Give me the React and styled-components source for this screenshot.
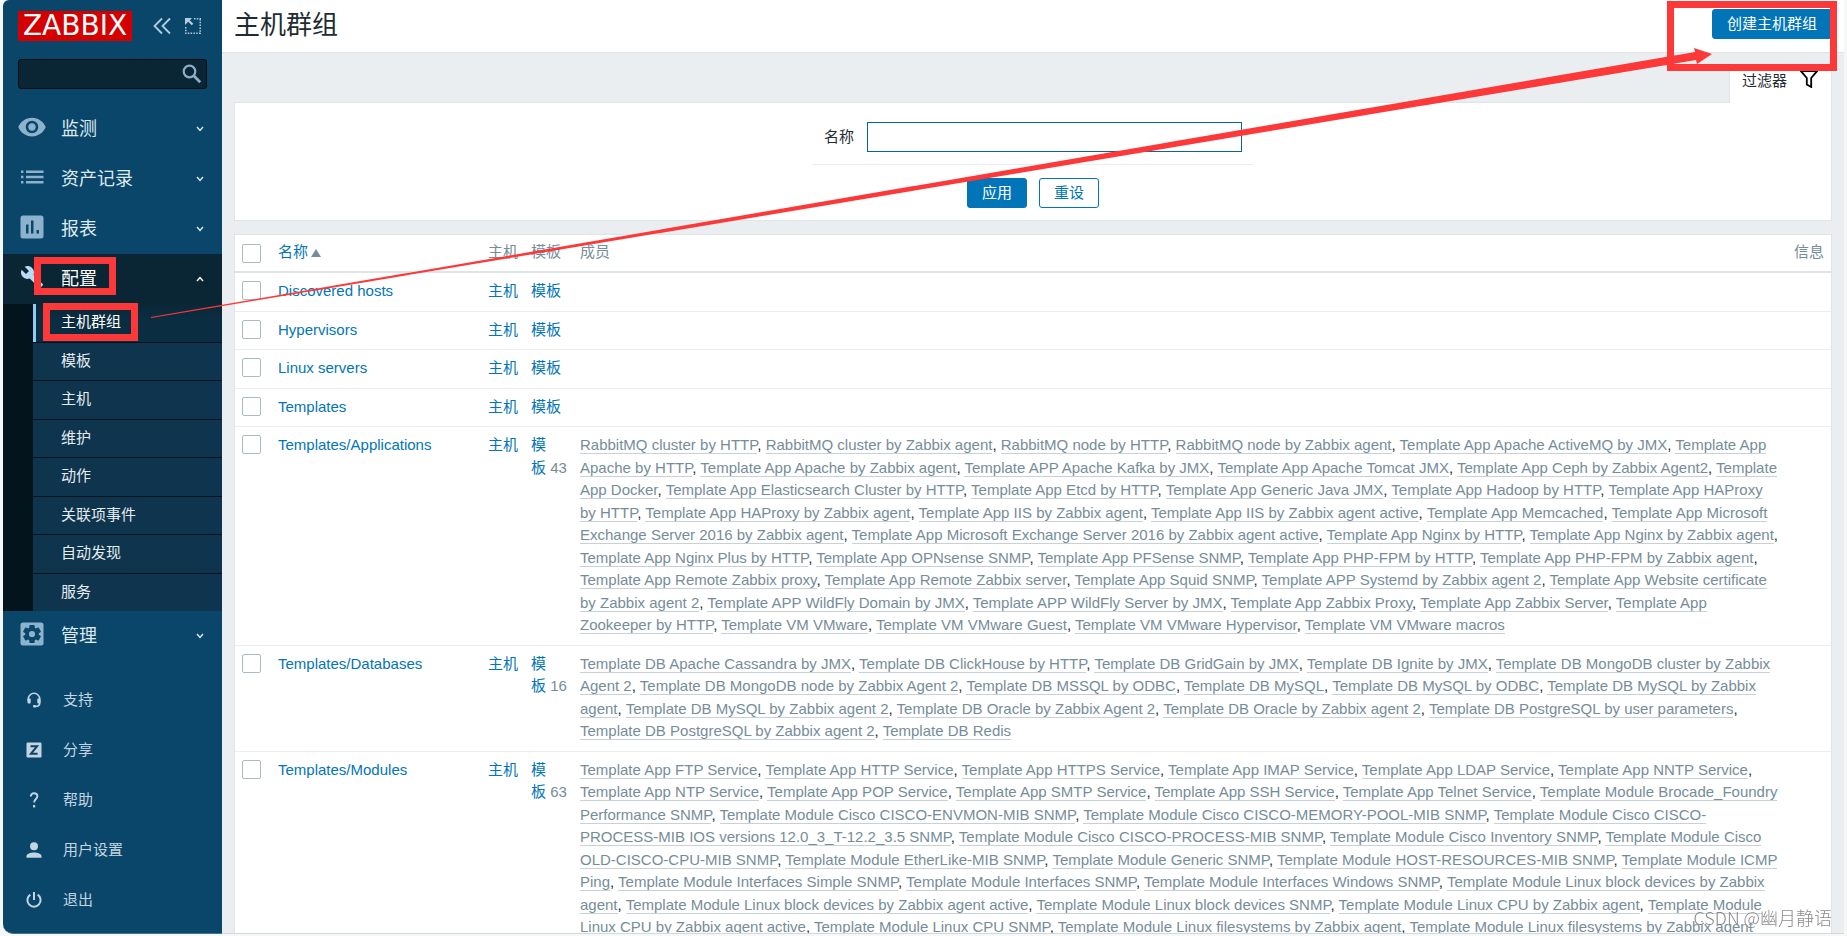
import React from "react";
import styled, { createGlobalStyle, css } from "styled-components";

const GlobalStyle = createGlobalStyle`
  *, *::before, *::after { box-sizing: border-box; }
  body {
    margin: 0;
    background: #f6f7f7;
    color: #1f2c33;
    font-family: "Liberation Sans", "Noto Sans CJK SC", sans-serif;
    font-size: 15px;
    line-height: 1.5;
  }
  button, input { font: inherit; }
  a { text-decoration: none; }
`;

const colors = {
  link: "#0275b8",
  grey: "#768d99",
  line: "#dfe4e7",
  rowLine: "#ebeef0",
  mark: "#fc3838",
};

/* ---------- frame ---------- */

const Frame = styled.div`
  position: relative;
  display: flex;
  height: 100vh;
  padding: 0 3px 2px;
  overflow: hidden;
`;

const Sidebar = styled.aside`
  display: flex;
  flex-direction: column;
  flex: none;
  width: 219px;
  background: #0a466a;
  border-radius: 6px 0 0 10px;
  border-bottom: 1px solid #48728c;
`;

const Main = styled.main`
  flex: 1;
  min-width: 0;
  overflow-y: auto;
  scrollbar-width: none;
  background: #ebeef0;
  border-bottom: 1px solid #d4d8da;
`;

/* ---------- sidebar ---------- */

const Brand = styled.div`
  display: flex;
  align-items: center;
  gap: 11px;
  padding: 11px 0 0 15px;
`;

const Logo = styled.a`
  flex: none;
  width: 114px;
  height: 30px;
  margin-right: 9px;
  background: #d40000;
  color: #fff;
  font: 28px/30px "DejaVu Sans", sans-serif;
  text-align: center;
`;

const IconButton = styled.button`
  display: flex;
  align-items: center;
  justify-content: center;
  width: 20px;
  height: 24px;
  padding: 0;
  border: 0;
  background: none;
  color: #b3cede;
`;

const Search = styled.form`
  display: flex;
  align-items: center;
  height: 30px;
  margin: 18px 15px 15px;
  padding-right: 4px;
  background: #0a2635;
  border: 1px solid #020d14;
  border-radius: 3px;
`;

const SearchInput = styled.input`
  flex: 1;
  min-width: 0;
  height: 100%;
  padding: 0 8px;
  border: 0;
  outline: 0;
  background: none;
  color: #fff;
`;

const SearchButton = styled(IconButton)`
  color: #8cadc4;
`;

const List = styled.ul`
  margin: 0;
  padding: 0;
  list-style: none;
`;

const NavItem = styled.li`
  position: relative;
`;

const NavLink = styled.a`
  display: flex;
  align-items: center;
  height: 50px;
  padding: 0 18px 0 14px;
  font-size: 18px;
  color: ${(p) => (p.$open ? "#fff" : "#dfe9f0")};
  background: ${(p) => (p.$open ? "#0a2635" : "transparent")};
`;

const NavIcon = styled.span`
  display: flex;
  justify-content: center;
  width: 30px;
  margin-right: 14px;
  padding-bottom: 4px;
  color: ${(p) => (p.$open ? "#b9dcf4" : "#8db2cc")};
`;

const NavText = styled.span`
  flex: 1;
`;

const Submenu = styled(List)`
  padding-left: 30px;
  background: #04141d;
`;

const SubLink = styled.a`
  display: block;
  padding: 7px 0 8px 28px;
  background: #0f344d;
  color: #e5edf2;
  ${(p) =>
    p.$current &&
    css`
      padding-left: 25px;
      border-left: 3px solid #8fcbf5;
      background: linear-gradient(#0a2635, #0b2d42 14px);
      color: #fff;
    `}
`;

const SubItem = styled.li`
  position: relative;
  & + & { border-top: 1px solid #04141d; }
`;

const UserList = styled(List)`
  margin-top: 14px;
`;

const UserLink = styled.a`
  display: flex;
  align-items: center;
  height: 50px;
  padding-left: 20px;
  color: #c3d5e1;
`;

const UserIcon = styled.span`
  display: flex;
  justify-content: center;
  width: 21px;
  margin-right: 19px;
`;

/* ---------- content ---------- */

const Header = styled.header`
  position: relative;
  display: flex;
  align-items: center;
  justify-content: space-between;
  height: 53px;
  padding: 0 12px 4px;
  background: #fff;
  border-bottom: 1px solid ${colors.line};
`;

const Title = styled.h1`
  margin: 0;
  padding-top: 2px;
  font-size: 26px;
  font-weight: 400;
  line-height: 40px;
`;

const Button = styled.button`
  height: 30px;
  padding: 0 14px;
  border: 1px solid ${colors.link};
  border-radius: 3px;
  line-height: 28px;
  background: ${(p) => (p.$outline ? "#fff" : colors.link)};
  color: ${(p) => (p.$outline ? colors.link : "#fff")};
`;

const Content = styled.div`
  padding: 12px;
`;

const FilterTabs = styled.div`
  display: flex;
  justify-content: flex-end;
`;

const FilterTab = styled.a`
  position: relative;
  display: flex;
  height: 38px;
  margin-bottom: -1px;
  padding: 5px 13px 0 12px;
  gap: 13px;
  background: #fff;
  border: solid ${colors.line};
  border-width: 0 1px;
  color: #1f2c33;
`;

const FilterPanel = styled.form`
  display: flex;
  flex-direction: column;
  align-items: center;
  margin-bottom: 13px;
  padding: 19px 12px 12px;
  background: #fff;
  border: 1px solid ${colors.line};
`;

const Field = styled.div`
  display: flex;
  align-items: center;
  gap: 13px;
  margin-bottom: 13px;
  padding: 0 12px 12px;
  border-bottom: 1px solid ${colors.rowLine};
`;

const TextInput = styled.input`
  width: 375px;
  height: 30px;
  padding: 0 6px;
  border: 1px solid #0a639c;
  border-radius: 0;
  outline: 0;
  background: #fff;
`;

const Actions = styled.div`
  display: flex;
  gap: 12px;
`;

const Table = styled.table`
  width: 100%;
  table-layout: fixed;
  border-collapse: separate;
  border-spacing: 0;
  background: #fff;
  border: 1px solid ${colors.line};
`;

const Col = styled.col`
  width: ${(p) => (p.$width ? p.$width + "px" : "auto")};
`;

const Th = styled.th`
  height: 38px;
  padding: 0 6px 1px;
  border-bottom: 2px solid ${colors.line};
  color: ${colors.grey};
  font-weight: 400;
  text-align: left;
  white-space: nowrap;
`;

const Td = styled.td`
  padding: 7px 6px 8px;
  border-bottom: 1px solid ${colors.rowLine};
  vertical-align: top;
`;

const Link = styled.a`
  color: ${colors.link};
`;

const SortMark = styled.span`
  display: inline-block;
  margin-left: 3px;
  border: solid transparent;
  border-width: 0 5px 8px;
  border-bottom-color: ${colors.grey};
`;

const Check = styled.input`
  display: block;
  appearance: none;
  width: 19px;
  height: 19px;
  margin: 1px 0 0 1px;
  background: #fff;
  border: 1px solid #acbbc2;
  border-radius: 2px;
`;

const Count = styled.span`
  color: ${colors.grey};
`;

const Member = styled.a`
  color: ${colors.grey};
  border-bottom: 1px solid #c8d1d6;
`;

/* ---------- marks drawn over the page ---------- */

const Mark = styled.span`
  position: absolute;
  z-index: 2;
  border: 7px solid ${colors.mark};
  pointer-events: none;
`;

const ConfigMark = styled(Mark)`
  top: 3px;
  left: 31px;
  width: 82px;
  height: 38px;
`;

const GroupsMark = styled(Mark)`
  top: -1px;
  left: 10px;
  width: 95px;
  height: 38px;
`;

const CreateMark = styled(Mark)`
  top: 1px;
  right: 10px;
  width: 170px;
  height: 70px;
`;

const Arrow = styled.svg`
  position: absolute;
  z-index: 3;
  top: 48px;
  left: 151px;
  width: calc(100% - 286px);
  height: 270px;
  pointer-events: none;
`;

const Watermark = styled.span`
  position: absolute;
  right: 15px;
  bottom: 5px;
  color: rgba(110, 110, 110, 0.8);
  font: 300 18px/27px "Noto Sans CJK SC", sans-serif;
  text-shadow: 0 0 2px #fff;
`;

/* ---------- icons ---------- */

const Svg = ({ size = 24, box = 24, children, ...rest }) => (
  <svg width={size} height={size} viewBox={`0 0 ${box} ${box}`} fill="currentColor" aria-hidden="true" {...rest}>
    {children}
  </svg>
);

const EyeIcon = () => (
  <Svg size={30}>
    <path d="M12 4.5C7 4.5 2.73 7.61 1 12c1.73 4.39 6 7.5 11 7.5s9.27-3.11 11-7.5c-1.73-4.39-6-7.5-11-7.5zM12 17c-2.76 0-5-2.24-5-5s2.24-5 5-5 5 2.24 5 5-2.24 5-5 5zm0-8c-1.66 0-3 1.34-3 3s1.34 3 3 3 3-1.34 3-3-1.34-3-3-3z" />
  </Svg>
);
const ListIcon = () => (
  <Svg>
    <path d="M1 5.5h2.4V8H1zM6 5.5h17.5V8H6zM1 10.7h2.4v2.5H1zM6 10.7h17.5v2.5H6zM1 16h2.4v2.5H1zM6 16h17.5v2.5H6z" />
  </Svg>
);
const ChartIcon = () => (
  <Svg>
    <path
      fillRule="evenodd"
      d="M3 .5h18A2.5 2.5 0 0 1 23.500 3v18a2.5 2.5 0 0 1-2.5 2.5H3A2.5 2.5 0 0 1 .5 21V3A2.5 2.5 0 0 1 3 .5zM6 9.500v9h2.500v-9zM11 5.500v13h2.500v-13zM16.500 15v3.500H19V15z"
    />
  </Svg>
);
const WrenchIcon = () => (
  <Svg>
    <path d="M22.7 19l-9.1-9.1c.9-2.3.4-5-1.5-6.9-2-2-5-2.4-7.4-1.3L9 6 6 9 1.6 4.7C.4 7.1.9 10.1 2.9 12.1c1.9 1.9 4.6 2.4 6.9 1.5l9.1 9.1c.4.4 1 .4 1.4 0l2.3-2.3c.5-.4.5-1.1.1-1.4z" />
  </Svg>
);
const GearIcon = () => (
  <Svg>
    <rect x="0.5" y="0.5" width="23" height="23" rx="2.5" />
    <g fill="#0a466a">
      <circle cx="12" cy="12" r="6.8" />
      {[0, 60, 120].map((a) => (
        <rect key={a} x="9.3" y="3" width="5.4" height="18" rx="0.8" transform={`rotate(${a} 12 12)`} />
      ))}
    </g>
    <circle cx="12" cy="12" r="3.1" />
  </Svg>
);
const ChevronIcon = ({ up }) => (
  <Svg size={8} box={8} fill="none" stroke="currentColor" strokeWidth="1.4">
    <path d={up ? "M1 6l3-3.500L7 6" : "M1 2l3 3.500L7 2"} />
  </Svg>
);
const CollapseIcon = () => (
  <Svg size={18} box={18} fill="none" stroke="currentColor" strokeWidth="1.8">
    <path d="M9 1.500L1.500 9 9 16.500M17 1.500L9.500 9l7.500 7.500" />
  </Svg>
);
const KioskIcon = () => (
  <Svg size={16} box={16}>
    <path d="M0 0h7L4.800 2.200l3.500 3.500-1.600 1.600-3.500-3.500L0 7z" />
    <path
      d="M9 .8h7M.8 9v7M15.200 1v15M0 15.200h16"
      fill="none"
      stroke="currentColor"
      strokeWidth="1.5"
      strokeDasharray="1.5 1.3"
    />
  </Svg>
);
const SearchIcon = () => (
  <Svg size={20} box={20} fill="none" stroke="currentColor">
    <circle cx="7.5" cy="7.5" r="5.8" strokeWidth="2.2" />
    <path d="M11.800 11.800l6.400 6.400" strokeWidth="2.8" />
  </Svg>
);
const FunnelIcon = () => (
  <Svg size={18} box={18} fill="none" stroke="#000" strokeWidth="1.8">
    <path d="M1 1.200h16L11.200 8v9L6.800 14.500V8z" />
  </Svg>
);
const HeadsetIcon = () => (
  <Svg size={16} box={16}>
    <path d="M2.300 9V7a5.700 5.700 0 0 1 11.400 0v4c0 2-1.400 3.500-4.700 3.500" fill="none" stroke="currentColor" strokeWidth="1.6" />
    <rect x="1.5" y="6.5" width="3.2" height="5" rx="1" />
    <rect x="11.3" y="6.5" width="3.2" height="5" rx="1" />
    <rect x="7" y="13" width="3" height="2.6" rx="1" />
  </Svg>
);
const ShareIcon = () => (
  <Svg size={16} box={16}>
    <rect x="0.5" y="0.5" width="15" height="15" rx="1.2" />
    <path d="M4.500 4.300h6.500L5 11.700h6.600" fill="none" stroke="#0a466a" strokeWidth="2.1" />
  </Svg>
);
const HelpIcon = () => (
  <Svg size={16} box={16}>
    <path d="M4.800 4.500C4.800 2.500 6 1.300 8 1.300s3.400 1.200 3.400 3c0 2.700-3.300 2.900-3.300 6.200" fill="none" stroke="currentColor" strokeWidth="1.9" />
    <rect x="7" y="13" width="2.2" height="2.4" />
  </Svg>
);
const UserGlyph = () => (
  <Svg size={16} box={16}>
    <circle cx="8" cy="4.3" r="4" />
    <path d="M.5 15.700v-1.500c0-2.500 4-3.700 7.500-3.700s7.500 1.200 7.500 3.700v1.500z" />
  </Svg>
);
const PowerIcon = () => (
  <Svg size={16} box={16} fill="none" stroke="currentColor" strokeWidth="2">
    <path d="M8 0v8M4.300 2.600a6.600 6.600 0 1 0 7.400 0" />
  </Svg>
);

/* ---------- data ---------- */

const mainNav = [
  { label: "监测", icon: EyeIcon },
  { label: "资产记录", icon: ListIcon },
  { label: "报表", icon: ChartIcon },
  {
    label: "配置",
    icon: WrenchIcon,
    children: ["主机群组", "模板", "主机", "维护", "动作", "关联项事件", "自动发现", "服务"],
  },
  { label: "管理", icon: GearIcon },
];

const userNav = [
  { label: "支持", icon: HeadsetIcon },
  { label: "分享", icon: ShareIcon },
  { label: "帮助", icon: HelpIcon },
  { label: "用户设置", icon: UserGlyph },
  { label: "退出", icon: PowerIcon },
];

const groups = [
  { name: "Discovered hosts" },
  { name: "Hypervisors" },
  { name: "Linux servers" },
  { name: "Templates" },
  {
    name: "Templates/Applications",
    count: 43,
    members:
      "RabbitMQ cluster by HTTP, RabbitMQ cluster by Zabbix agent, RabbitMQ node by HTTP, RabbitMQ node by Zabbix agent, Template App Apache ActiveMQ by JMX, Template App Apache by HTTP, Template App Apache by Zabbix agent, Template APP Apache Kafka by JMX, Template App Apache Tomcat JMX, Template App Ceph by Zabbix Agent2, Template App Docker, Template App Elasticsearch Cluster by HTTP, Template App Etcd by HTTP, Template App Generic Java JMX, Template App Hadoop by HTTP, Template App HAProxy by HTTP, Template App HAProxy by Zabbix agent, Template App IIS by Zabbix agent, Template App IIS by Zabbix agent active, Template App Memcached, Template App Microsoft Exchange Server 2016 by Zabbix agent, Template App Microsoft Exchange Server 2016 by Zabbix agent active, Template App Nginx by HTTP, Template App Nginx by Zabbix agent, Template App Nginx Plus by HTTP, Template App OPNsense SNMP, Template App PFSense SNMP, Template App PHP-FPM by HTTP, Template App PHP-FPM by Zabbix agent, Template App Remote Zabbix proxy, Template App Remote Zabbix server, Template App Squid SNMP, Template APP Systemd by Zabbix agent 2, Template App Website certificate by Zabbix agent 2, Template APP WildFly Domain by JMX, Template APP WildFly Server by JMX, Template App Zabbix Proxy, Template App Zabbix Server, Template App Zookeeper by HTTP, Template VM VMware, Template VM VMware Guest, Template VM VMware Hypervisor, Template VM VMware macros",
  },
  {
    name: "Templates/Databases",
    count: 16,
    members:
      "Template DB Apache Cassandra by JMX, Template DB ClickHouse by HTTP, Template DB GridGain by JMX, Template DB Ignite by JMX, Template DB MongoDB cluster by Zabbix Agent 2, Template DB MongoDB node by Zabbix Agent 2, Template DB MSSQL by ODBC, Template DB MySQL, Template DB MySQL by ODBC, Template DB MySQL by Zabbix agent, Template DB MySQL by Zabbix agent 2, Template DB Oracle by Zabbix Agent 2, Template DB Oracle by Zabbix agent 2, Template DB PostgreSQL by user parameters, Template DB PostgreSQL by Zabbix agent 2, Template DB Redis",
  },
  {
    name: "Templates/Modules",
    count: 63,
    members:
      "Template App FTP Service, Template App HTTP Service, Template App HTTPS Service, Template App IMAP Service, Template App LDAP Service, Template App NNTP Service, Template App NTP Service, Template App POP Service, Template App SMTP Service, Template App SSH Service, Template App Telnet Service, Template Module Brocade_Foundry Performance SNMP, Template Module Cisco CISCO-ENVMON-MIB SNMP, Template Module Cisco CISCO-MEMORY-POOL-MIB SNMP, Template Module Cisco CISCO-PROCESS-MIB IOS versions 12.0_3_T-12.2_3.5 SNMP, Template Module Cisco CISCO-PROCESS-MIB SNMP, Template Module Cisco Inventory SNMP, Template Module Cisco OLD-CISCO-CPU-MIB SNMP, Template Module EtherLike-MIB SNMP, Template Module Generic SNMP, Template Module HOST-RESOURCES-MIB SNMP, Template Module ICMP Ping, Template Module Interfaces Simple SNMP, Template Module Interfaces SNMP, Template Module Interfaces Windows SNMP, Template Module Linux block devices by Zabbix agent, Template Module Linux block devices by Zabbix agent active, Template Module Linux block devices SNMP, Template Module Linux CPU by Zabbix agent, Template Module Linux CPU by Zabbix agent active, Template Module Linux CPU SNMP, Template Module Linux filesystems by Zabbix agent, Template Module Linux filesystems by Zabbix agent",
  },
];

/* ---------- parts ---------- */

const MainNav = () => (
  <nav>
    <List>
      {mainNav.map(({ label, icon: Icon, children }) => (
        <NavItem key={label}>
          <NavLink href="#" $open={!!children}>
            <NavIcon $open={!!children}>
              <Icon />
            </NavIcon>
            <NavText>{label}</NavText>
            <ChevronIcon up={!!children} />
          </NavLink>
          {children && <ConfigMark />}
          {children && (
            <Submenu>
              {children.map((item, i) => (
                <SubItem key={item}>
                  <SubLink href="#" $current={i === 0}>
                    {item}
                  </SubLink>
                  {i === 0 && <GroupsMark />}
                </SubItem>
              ))}
            </Submenu>
          )}
        </NavItem>
      ))}
    </List>
    <UserList>
      {userNav.map(({ label, icon: Icon }) => (
        <li key={label}>
          <UserLink href="#">
            <UserIcon>
              <Icon />
            </UserIcon>
            {label}
          </UserLink>
        </li>
      ))}
    </UserList>
  </nav>
);

const Members = ({ text }) =>
  text.split(", ").map((name, i) => (
    <React.Fragment key={i}>
      {i > 0 && ", "}
      <Member href="#">{name}</Member>
    </React.Fragment>
  ));

const GroupRow = ({ group }) => (
  <tr>
    <Td>
      <Check type="checkbox" aria-label={group.name} />
    </Td>
    <Td>
      <Link href="#">{group.name}</Link>
    </Td>
    <Td>
      <Link href="#">主机</Link>
    </Td>
    <Td>
      <Link href="#">模板</Link>
      {group.count && <Count>{"\u00a0" + group.count}</Count>}
    </Td>
    <Td>{group.members && <Members text={group.members} />}</Td>
    <Td />
  </tr>
);

export default function App() {
  return (
    <Frame>
      <GlobalStyle />
      <Sidebar>
        <Brand>
          <Logo href="#">ZABBIX</Logo>
          <IconButton aria-label="Collapse">
            <CollapseIcon />
          </IconButton>
          <IconButton aria-label="Hide sidebar">
            <KioskIcon />
          </IconButton>
        </Brand>
        <Search>
          <SearchInput type="text" aria-label="Search" />
          <SearchButton type="button" aria-label="Search">
            <SearchIcon />
          </SearchButton>
        </Search>
        <MainNav />
      </Sidebar>
      <Main>
        <Header>
          <Title>主机群组</Title>
          <Button type="button">创建主机群组</Button>
        </Header>
        <Content>
          <FilterTabs>
            <FilterTab href="#">
              过滤器
              <FunnelIcon />
            </FilterTab>
          </FilterTabs>
          <FilterPanel>
            <Field>
              <label htmlFor="filter-name">名称</label>
              <TextInput id="filter-name" type="text" />
            </Field>
            <Actions>
              <Button type="button">应用</Button>
              <Button type="button" $outline>
                重设
              </Button>
            </Actions>
          </FilterPanel>
          <Table>
            <colgroup>
              <Col $width={37} />
              <Col $width={210} />
              <Col $width={43} />
              <Col $width={49} />
              <Col />
              <Col $width={43} />
            </colgroup>
            <thead>
              <tr>
                <Th>
                  <Check type="checkbox" aria-label="全选" />
                </Th>
                <Th>
                  <Link href="#">
                    名称
                    <SortMark />
                  </Link>
                </Th>
                <Th>主机</Th>
                <Th>模板</Th>
                <Th>成员</Th>
                <Th>信息</Th>
              </tr>
            </thead>
            <tbody>
              {groups.map((group) => (
                <GroupRow key={group.name} group={group} />
              ))}
            </tbody>
          </Table>
        </Content>
      </Main>
      <CreateMark />
      <Arrow viewBox="0 0 1561 270" preserveAspectRatio="none">
        <polygon fill={colors.mark} points="0,269 1544,4 1543,0 1561,6 1546,16 1545,12 0,270" />
      </Arrow>
      <Watermark>CSDN @幽月静语</Watermark>
    </Frame>
  );
}
